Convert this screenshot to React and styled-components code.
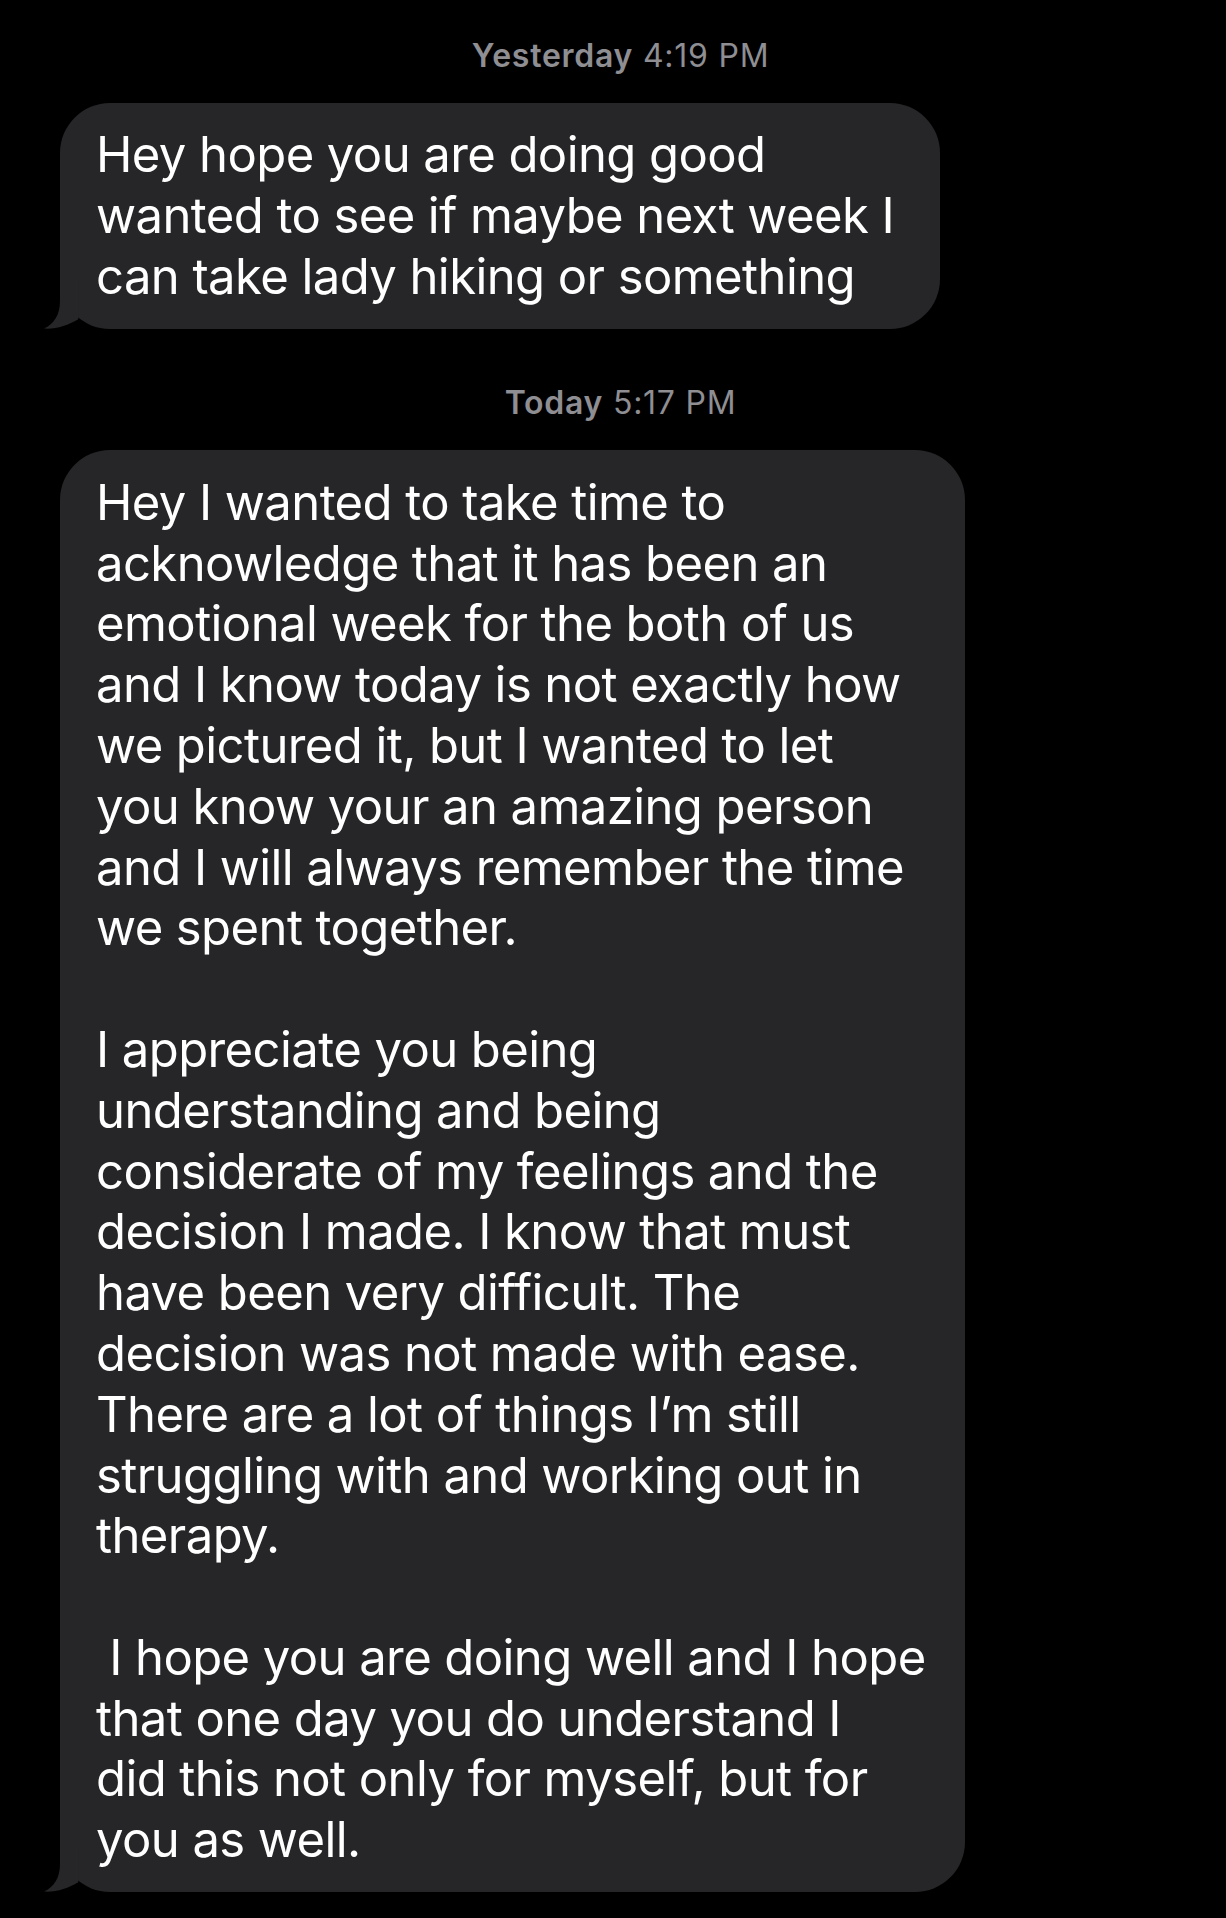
import React from "react";
import styled, { createGlobalStyle } from "styled-components";

const GlobalStyle = createGlobalStyle`
  html, body {
    margin: 0;
    padding: 0;
    background: #000000;
  }
  body {
    font-family: "Inter", "Noto Sans", "Liberation Sans", sans-serif;
    -webkit-font-smoothing: antialiased;
  }
`;

const Thread = styled.main`
  display: flex;
  flex-direction: column;
  padding-top: 37px;
  min-height: 1918px;
  box-sizing: border-box;
  background: #000000;
`;

const Stamp = styled.div`
  text-align: center;
  padding-left: 15px;
  margin-top: ${(p) => p.$gap}px;
  margin-bottom: 27.7px;
  font-family: "Inter", "Liberation Sans", sans-serif;
  font-size: 32px;
  line-height: 38px;
  color: #8e8e93;
  letter-spacing: 0.75px;
`;

const Day = styled.span`
  font-weight: 600;
`;

const Row = styled.div`
  display: flex;
  padding-left: 60px;
`;

const Bubble = styled.div`
  position: relative;
  box-sizing: border-box;
  width: ${(p) => p.$width}px;
  background: #262628;
  border-radius: 50px;
  padding: 22.8px 0 21.4px 36px;
  font-family: "Inter", "Liberation Sans", sans-serif;
  font-size: 49px;
  line-height: 60.8px;
  letter-spacing: -0.58px;
  color: #ffffff;
  white-space: pre;
`;

const Tail = styled.svg`
  position: absolute;
  left: -16px;
  bottom: 0;
  width: 40px;
  height: 50px;
  display: block;
`;

const BubbleTail = () => (
  <Tail viewBox="0 0 40 50" aria-hidden="true">
    <path
      d="M16,0 L16,22 C16,36 10,45 0,49.6 C12,50.4 24,46.5 34.3,40.3 L34.3,0 Z"
      fill="#262628"
    />
  </Tail>
);

const Message = ({ width, lines }) => (
  <Row>
    <Bubble $width={width}>
      {lines.join("\n")}
      <BubbleTail />
    </Bubble>
  </Row>
);

const first = [
  "Hey hope you are doing good",
  "wanted to see if maybe next week I",
  "can take lady hiking or something",
];

const second = [
  "Hey I wanted to take time to",
  "acknowledge that it has been an",
  "emotional week for the both of us",
  "and I know today is not exactly how",
  "we pictured it, but I wanted to let",
  "you know your an amazing person",
  "and I will always remember the time",
  "we spent together.",
  "",
  "I appreciate you being",
  "understanding and being",
  "considerate of my feelings and the",
  "decision I made. I know that must",
  "have been very difficult. The",
  "decision was not made with ease.",
  "There are a lot of things I\u2019m still",
  "struggling with and working out in",
  "therapy.",
  "",
  " I hope you are doing well and I hope",
  "that one day you do understand I",
  "did this not only for myself, but for",
  "you as well.",
];

export default function App() {
  return (
    <>
      <GlobalStyle />
      <Thread>
        <Stamp $gap={0}>
          <Day>Yesterday</Day> 4:19 PM
        </Stamp>
        <Message width={880} lines={first} />
        <Stamp $gap={55}>
          <Day>Today</Day> 5:17 PM
        </Stamp>
        <Message width={905} lines={second} />
      </Thread>
    </>
  );
}
